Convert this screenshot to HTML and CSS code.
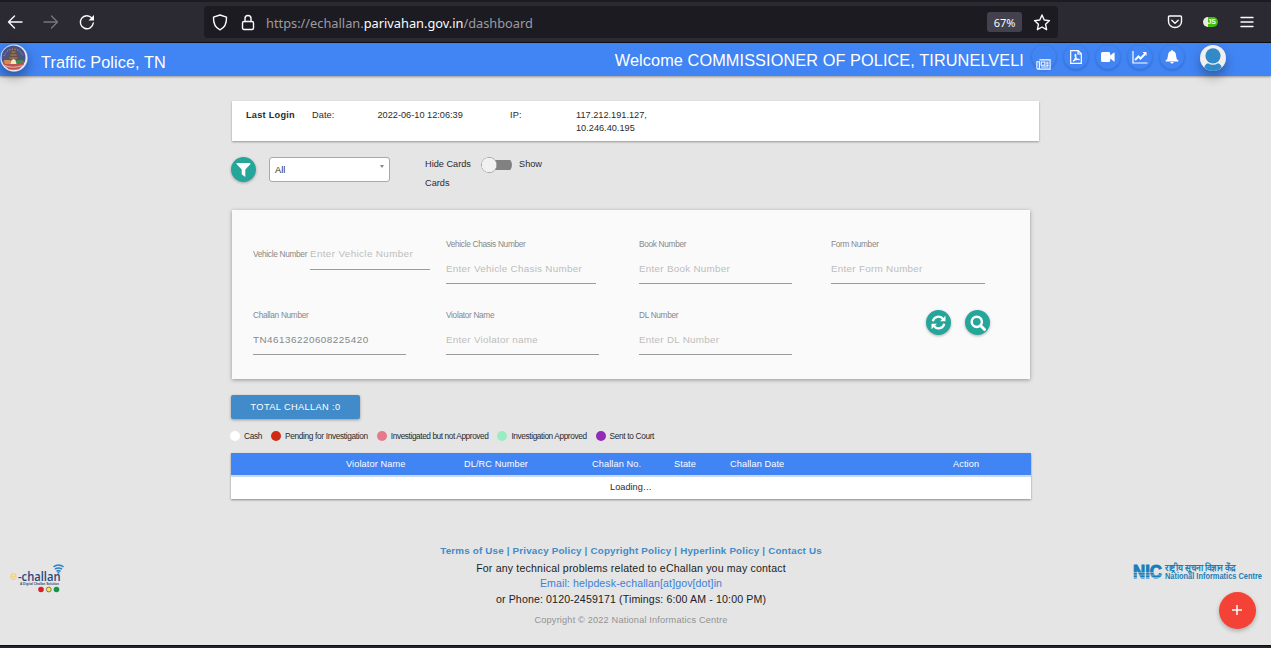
FILE: index.html
```html
<!DOCTYPE html>
<html lang="en">
<head>
<meta charset="utf-8">
<title>eChallan Dashboard</title>
<link rel="stylesheet" href="styles.css">
</head>
<body>
<div class="toolbar">
  <svg class="tool-back" width="16" height="16" viewBox="0 0 16 16"><path d="M15 8H1.500M7.500 2L1.500 8l6 6"/></svg>
  <svg class="tool-forward" width="16" height="16" viewBox="0 0 16 16"><path d="M1 8h13.500M8.500 2l6 6-6 6"/></svg>
  <svg class="tool-reload" width="16" height="16" viewBox="0 0 16 16"><path d="M14.300 9A6.500 6.500 0 1 1 12.800 4L14 5.300"/><path class="solid" d="M15 1v5.500H9.500z"/></svg>
  <div class="urlbar">
    <svg width="16" height="17" viewBox="0 0 16 17"><path d="M8 1L14.500 3.200C14.700 9 13 13.500 8 15.800C3 13.500 1.300 9 1.500 3.200z"/></svg>
    <svg class="lock" width="14" height="17" viewBox="0 0 14 17"><rect x="1.500" y="7.500" width="11" height="8" rx="1.500"/><path d="M4 7.500V4.500a3 3 0 0 1 6 0v3"/></svg>
    <div class="url">https://echallan.<b>parivahan.gov.in</b>/dashboard</div>
    <div class="zoom-level">67%</div>
    <svg width="18" height="17" viewBox="0 0 18 17"><path d="M9 1l2.200 5 5.300.600-3.900 3.700 1 5.400L9 13l-4.600 2.700 1-5.400L1.500 6.600 6.800 6z"/></svg>
  </div>
  <svg class="pocket" width="16" height="14" viewBox="0 0 16 14"><path d="M2.500 1h11a1 1 0 0 1 1 1v4.500a6.500 6 0 0 1-13 0V2a1 1 0 0 1 1-1zM4.800 5.200L8 8.300l3.200-3.100"/></svg>
  <div class="js-toggle"><span>JS</span></div>
  <svg class="menu" width="14" height="12" viewBox="0 0 14 12"><path d="M1 1.500h12M1 6h12M1 10.500h12"/></svg>
</div>

<header class="header">
  <svg class="emblem" width="28" height="28" viewBox="0 0 28 28">
    <circle cx="14" cy="14" r="13.500" fill="#e9e8ee"/>
    <circle cx="13.500" cy="13.500" r="12" fill="#4b5487"/>
    <path d="M2.500 17h22l-1 4-5 4.500H9L4 21z" fill="#bd5450"/>
    <path d="M7 18L11.500 3h4L20 18z" fill="#675046"/>
    <path d="M10.500 11h6M9.500 14h8M11.500 8h4" stroke="#a88b67"/>
    <path d="M4 16h6l3 4H5z" fill="#d88a4b"/><path d="M23 16h-6l-3 4h8z" fill="#3e8a54"/>
    <path d="M10.500 20l1-4 2-1 2 1 1 4z" fill="#f4e8c8"/>
    <path d="M4.500 21.500q9 3.500 18 0" stroke="#e3b9b5" stroke-width="1" fill="none"/>
    <path d="M4 12A10 10 0 0 1 23 12" fill="none" stroke="#b8b5cc" stroke-dasharray="1 1.700" stroke-width="1"/>
  </svg>
  <div class="brand">Traffic Police, TN</div>
  <div class="welcome">Welcome COMMISSIONER OF POLICE, TIRUNELVELI</div>
  <nav class="actions">
    <a class="round news"><svg width="15" height="11" viewBox="0 0 16 12"><path d="M3.500 1h11.700v10H2Q.8 11 .8 9.500V3h2.700v6.500Q3.500 11 2 11"/><path d="M5.500 3.200h4v3.600h-4zM11 3.500h2.500M11 5.200h2.500M11 6.900h2.500M5.500 8.800h8"/></svg></a>
    <a class="round"><svg width="12" height="14" viewBox="0 0 12 14"><path d="M.7.7h7.500l3.100 3.100v9.500H.7zM8 .7V4h3.300"/><path d="M3 11.200c1.800-1 3.400-4.600 2.700-6.500-.4-1-.9.600-.2 2.300.7 1.800 2.200 2.700 3.600 2.600.6-.5-3-.8-6.100 1.600z"/></svg></a>
    <a class="round"><svg width="14" height="10" viewBox="0 0 14 10"><path class="solid" d="M1.500 0h6.500q1.200 0 1.200 1.500V3.500L13 .5q.6 0 .6.500v8q0 .5-.6.500L9.200 6.500v2Q9.200 10 8 10H1.500Q0 10 0 8.500v-7Q0 0 1.500 0z"/></svg></a>
    <a class="round"><svg width="16" height="13" viewBox="0 0 16 13"><path d="M1 0v12h14.500"/><path class="trend" d="M3 9l3.500-3.500 2 2L13 3"/><path class="solid" d="M10.500 1h4v4z"/></svg></a>
    <a class="round"><svg width="14" height="14" viewBox="0 0 14 14"><path class="solid" d="M7 0q.9 0 .9 1 3 .7 3.100 4.500 0 3.500 2.500 5.200V11.500H.5V10.700Q3 9 3 5.500 3.100 1.700 6.100 1 6.100 0 7 0zM5.300 12h3.400Q8.500 13.500 7 13.500T5.300 12z"/></svg></a>
    <svg class="avatar" width="26" height="26" viewBox="0 0 26 26"><circle cx="13" cy="13" r="13" fill="#f1eff0"/><circle cx="13" cy="10.800" r="7.600" fill="#338ac9"/><path d="M4.200 22.500Q5.500 18.500 8 18.200q5 3.300 10 0 2.500.3 3.800 4.300Q18 26 13 26T4.200 22.500z" fill="#338ac9"/></svg>
  </nav>
</header>

<main class="content">
  <section class="login-card">
    <b>Last Login</b><span>Date:</span><span class="tight">2022-06-10 12:06:39</span><span>IP:</span><span class="tight">117.212.191.127,<br>10.246.40.195</span>
  </section>

  <section class="controls">
    <button class="teal"><svg width="15" height="14" viewBox="0 0 15 14"><path class="solid" d="M1 0h13q.9.500.300 1.200L9.300 6.500V14L5.700 11.200V6.500L.7 1.200Q.1.500 1 0z"/></svg></button>
    <div class="select"><span>All</span><i></i></div>
    <div class="switch-row"><span>Hide Cards</span><span class="switch"></span><span>Show</span><span class="second">Cards</span></div>
  </section>

  <section class="filter-card">
    <div class="field inline"><label>Vehicle Number</label><input placeholder="Enter Vehicle Number"></div>
    <div class="field w150"><label>Vehicle Chasis Number</label><input placeholder="Enter Vehicle Chasis Number"></div>
    <div class="field"><label>Book Number</label><input placeholder="Enter Book Number"></div>
    <div class="field w154"><label>Form Number</label><input placeholder="Enter Form Number"></div>
    <div class="field"><label>Challan Number</label><input class="filled" value="TN46136220608225420"></div>
    <div class="field"><label>Violator Name</label><input placeholder="Enter Violator name"></div>
    <div class="field"><label>DL Number</label><input placeholder="Enter DL Number"></div>
    <div class="buttons">
      <button class="teal"><svg width="15" height="15" viewBox="0 0 15 15"><path class="arc" d="M1.800 6.300A5.700 5.700 0 0 1 12 4M13.200 8.700A5.700 5.700 0 0 1 3 11"/><path class="solid" d="M14.500.8v5.400H9.100zM.5 14.200V8.800h5.400z"/></svg></button>
      <button class="teal"><svg width="16" height="16" viewBox="0 0 16 16"><circle class="lens" cx="6.800" cy="6.800" r="5.100"/><path class="handle" d="M10.500 10.500l4 4"/></svg></button>
    </div>
  </section>

  <button class="total">TOTAL CHALLAN :0</button>

  <ul class="legend">
    <li class="cash">Cash</li><li class="pending">Pending for Investigation</li><li class="investigated">Investigated but not Approved</li><li class="approved">Investigation Approved</li><li class="court">Sent to Court</li>
  </ul>

  <section class="table">
    <div class="thead"><span>Violator Name</span><span>DL/RC Number</span><span>Challan No.</span><span>State</span><span>Challan Date</span><span>Action</span></div>
    <div class="row">Loading…</div>
  </section>
</main>

<footer class="footer">
  <svg class="echallan" width="56" height="30" viewBox="0 0 56 30">
    <text x="1" y="16" font-size="13" font-weight="700" fill="#f1d38c">e</text>
    <text x="9" y="17" font-family="Open Sans, sans-serif" font-size="12.500" font-weight="600" textLength="42.500" lengthAdjust="spacingAndGlyphs" fill="#24477f">-challan</text>
    <text x="11" y="21.200" font-size="3.800" font-weight="700" textLength="39" lengthAdjust="spacingAndGlyphs" fill="#35506f">A Digital Challan Solution</text>
    <g fill="none" stroke="#2783c2" stroke-width="1.500"><path d="M44.500 2.800q5-3.600 10 0M46 5.200q3.500-2.600 7 0M47.500 7.300q2-1.500 4 0"/></g><circle cx="49.500" cy="8.700" r="1.100" fill="#2783c2"/>
    <circle cx="32" cy="25.500" r="2.800" fill="#d71f2b"/><circle cx="39.800" cy="25.500" r="2.400" fill="#f5e65c" stroke="#6b6530" stroke-width=".8"/><circle cx="47.500" cy="25.500" r="2.800" fill="#179447"/>
  </svg>
  <div class="footer-text">
    <div class="links"><a>Terms of Use</a> | <a>Privacy Policy</a> | <a>Copyright Policy</a> | <a>Hyperlink Policy</a> | <a>Contact Us</a></div>
    <div class="help">For any technical problems related to eChallan you may contact</div>
    <div class="mail">Email: helpdesk-echallan[at]gov[dot]in</div>
    <div class="phone">or Phone: 0120-2459171 (Timings: 6:00 AM - 10:00 PM)</div>
    <div class="copyright">Copyright © 2022 National Informatics Centre</div>
  </div>
  <svg class="nic" width="132" height="24" viewBox="0 0 132 24">
    <text x="1" y="16.300" font-size="18" font-weight="700" textLength="29" lengthAdjust="spacingAndGlyphs" fill="#1b7db9" stroke="#1b7db9">NIC</text>
    <path d="M0 10.500h31M0 13h31M0 15.500h31" stroke="#e5e5e5" stroke-width=".5"/>
    <text x="33" y="8.500" font-size="9.500" font-weight="700" textLength="71" lengthAdjust="spacingAndGlyphs" fill="#1b7db9">राष्ट्रीय सूचना विज्ञान केंद्र</text>
    <text x="33" y="16.500" font-size="8.300" font-weight="700" textLength="97" lengthAdjust="spacingAndGlyphs" fill="#1b7db9">National Informatics Centre</text>
  </svg>
</footer>
<button class="fab"><svg width="10" height="10" viewBox="0 0 10 10"><path d="M5 0v10M0 5h10"/></svg></button>
<div class="bottom-edge"></div>
</body>
</html>
```

FILE: styles.css
```css
* { box-sizing: border-box; }
body {
  margin: 0;
  height: 648px;
  display: flex;
  flex-direction: column;
  position: relative;
  overflow: hidden;
  background: #e5e5e5;
  color: #2b2b2b;
  font: 9.2px/13px "Liberation Sans", Arial, sans-serif;
}
svg { display: block; flex: none; overflow: visible; }
button { border: 0; padding: 0; font: inherit; display: flex; align-items: center; justify-content: center; }
.solid { fill: #fff !important; stroke: none !important; }

/* Browser toolbar */
.toolbar {
  height: 43px;
  flex: none;
  display: flex;
  align-items: center;
  padding: 0 18px 0 7px;
  background: #2b2a33;
  border-top: 2px solid #1c1b22;
  border-bottom: 1px solid #0c0c13;
}
.toolbar svg { fill: none; stroke: #fbfbfe; stroke-width: 1.4; stroke-linecap: round; stroke-linejoin: round; }
.toolbar .tool-forward { margin-left: 20px; stroke: #77767d; }
.toolbar .tool-reload { margin-left: 20px; }
.urlbar {
  width: 854px;
  height: 32px;
  margin-left: 109px;
  padding: 0 7px 0 8px;
  display: flex;
  align-items: center;
  background: #1c1b22;
  border-radius: 4px;
}
.lock { margin-left: 13px; }
.url { margin-left: 11px; flex: 1; font: 12.8px/18px "Noto Sans", sans-serif; color: #9c9ba1; padding-top: 2px; }
.url b { color: #fbfbfe; font-weight: 400; }
.zoom-level {
  width: 35px;
  height: 20px;
  margin-right: 11px;
  border-radius: 3px;
  background: #42414d;
  color: #fbfbfe;
  font: 11px/21px "Noto Sans", sans-serif;
  text-align: center;
}
.toolbar .pocket { margin-left: 109px; }
.js-toggle {
  width: 15px;
  height: 10px;
  margin-left: 20px;
  border-radius: 5px;
  background: linear-gradient(90deg, #e5e9df 35%, #43bb13 36%);
  color: #fff;
  font: bold 7px/10px "Liberation Sans", sans-serif;
  text-align: right;
  padding-right: 2px;
}
.toolbar .menu { margin-left: auto; margin-right: -1px; }

/* Page header */
.header {
  height: 33px;
  flex: none;
  display: flex;
  align-items: flex-start;
  background: #4184f3;
  color: #fff;
  font-size: 16.3px;
  line-height: 20px;
  box-shadow: 0 1px 2px rgba(0, 0, 0, .35);
}
.emblem { border-radius: 50%; box-shadow: 0 5px 11px rgba(0, 0, 0, .35); margin-top: .5px; }
.brand { margin: 9px 0 0 13px; letter-spacing: .06px; }
.welcome { margin: 7px 0 0 auto; letter-spacing: .09px; }
.actions { display: flex; margin: 2px 45px 0 8px; gap: 8px; }
.round {
  width: 24px;
  height: 24px;
  border-radius: 50%;
  display: flex;
  align-items: center;
  justify-content: center;
  box-shadow: 0 1px 3px rgba(0, 0, 50, .24);
}
.round svg { fill: none; stroke: #fff; stroke-width: 1.2; }
.round .trend { stroke-width: 2; }
.news { padding: 15px 1px 0 0; }
.avatar { margin: 0 0 0 8px; border-radius: 50%; box-shadow: 0 6px 11px rgba(0, 0, 0, .3); }

/* Dashboard */
.content { width: 808px; margin: 25px 0 0 231px; flex: none; }
.login-card {
  margin-left: 1px;
  height: 40px;
  padding: 8px 0 0 14px;
  display: grid;
  grid-template-columns: 66px 65.500px 132.500px 66px 1fr;
  background: #fff;
  box-shadow: 0 1px 2px rgba(0, 0, 0, .35);
  letter-spacing: .1px;
}
.login-card b { letter-spacing: .25px; }
.login-card .tight { letter-spacing: 0; }
.controls { height: 69px; display: flex; padding-top: 16px; }
.teal {
  width: 25px;
  height: 25px;
  border-radius: 50%;
  background: #26a69a;
  box-shadow: 0 1px 3px rgba(0, 0, 0, .3);
}
.teal svg { fill: none; stroke: #fff; }
.arc { stroke-width: 2.2; }
.lens { stroke-width: 2.5; }
.handle { stroke-width: 3; stroke-linecap: round; }
.select {
  width: 121px;
  height: 25px;
  margin-left: 13px;
  padding: 2px 5px 0;
  display: flex;
  align-items: center;
  justify-content: space-between;
  background: #fff;
  border: 1px solid #a8a8a8;
  border-radius: 3px;
}
.select i { border: 2.5px solid transparent; border-top: 3px solid #888; border-bottom: 0; margin-top: -8px; }
.switch-row { display: grid; grid-template-columns: 56px 38px 40px; grid-template-rows: 16px 19px; align-items: center; margin-left: 35px; line-height: 14px; }
.switch-row span:not(.switch, .second) { margin-top: -2px; }
.switch-row .second { line-height: 19px; padding-top: 1px; }
.switch { width: 31px; height: 16px; border-radius: 8px; background: radial-gradient(circle at 8px 8px, #f1f1f1 7px, #a8a8a8 7.500px, transparent 8.500px), linear-gradient(#818181, #818181) 8px 3px / 23px 10px no-repeat; }
.filter-card {
  width: 798px;
  height: 169px;
  margin-left: 1px;
  padding: 29px 0 0 21px;
  display: grid;
  grid-template-columns: 193px 193px 192px 1fr;
  grid-template-rows: 45px 45px;
  row-gap: 26px;
  background: #fafafa;
  box-shadow: 0 1px 4px rgba(0, 0, 0, .35);
}
.field { width: 153px; display: flex; flex-direction: column; gap: 5px; }
.field.w150 { width: 150px; }
.field.w154 { width: 154px; }
.field label { height: 10px; font-size: 8.3px; line-height: 11px; letter-spacing: -.32px; color: #888; white-space: nowrap; }
.field input {
  width: 100%;
  height: 30px;
  padding: 0;
  border: 0;
  border-bottom: 1px solid #9b9b9b;
  background: transparent;
  color: #878787;
  font: 9.9px/13px "Liberation Sans", Arial, sans-serif;
  letter-spacing: .26px;
  border-radius: 0;
}
.field input.filled { letter-spacing: .48px; }
.field input::placeholder { color: #bdbdbd; }
.field.inline { width: 177px; height: 31px; flex-direction: row; align-items: center; gap: 3px; }
.field.inline input { width: 120px; flex: none; height: 31px; padding-bottom: 1px; letter-spacing: .35px; }
.field.inline label { width: 54px; height: 12px; }
.buttons { display: flex; gap: 14px; margin-left: 95px; }
.total {
  width: 129px;
  height: 24px;
  margin-top: 16px;
  background: #428bca;
  color: #fff;
  border-radius: 2px;
  letter-spacing: .4px;
  box-shadow: 0 1px 3px rgba(0, 0, 0, .35);
}
.legend { display: flex; list-style: none; margin: 11px 0 0 -1px; padding: 0; height: 12px; gap: 9px; font-size: 8.3px; line-height: 12px; letter-spacing: -.34px; white-space: nowrap; }
.legend li { display: flex; align-items: center; gap: 4px; }
.legend .investigated { letter-spacing: -.42px; }
.legend .approved { letter-spacing: -.4px; }
.legend li::before { content: ""; width: 10px; height: 10px; border-radius: 50%; background: var(--dot); }
.cash { --dot: #fff; }
.pending { --dot: #cf2a16; }
.investigated { --dot: #e67a8c; }
.approved { --dot: #98edc2; }
.court { --dot: #912bb8; }
.table { width: 800px; margin-top: 11px; background: #fff; box-shadow: 0 1px 2px rgba(0, 0, 0, .4); }
.thead { height: 24px; display: grid; grid-template-columns: 118px 128px 82px 56px 223px 1fr; padding-left: 115px; background: #4184f3; border-bottom: 2px solid #c8daf8; color: #fff; line-height: 22px; letter-spacing: .1px; }
.row { height: 22px; line-height: 21px; text-align: center; }

/* Footer */
.footer { height: 146px; flex: none; display: flex; justify-content: space-between; padding: 45px 7px 0 9px; }
.echallan { margin-top: 20px; }
.nic { margin-top: 18px; }
.footer-text { width: 400px; margin-left: 65px; text-align: center; white-space: nowrap; color: #222; font-size: 10.6px; line-height: 16px; letter-spacing: .17px; }
.links { font-size: 9.8px; line-height: 14px; font-weight: 700; letter-spacing: .19px; color: #428bca; margin-bottom: 2px; }
.mail { color: #3b80da; line-height: 15px; letter-spacing: .1px; }
.phone { letter-spacing: .13px; }
.copyright { font-size: 9.2px; color: #929292; margin-top: 5px; }
.fab { position: absolute; left: 1219px; top: 592px; width: 37px; height: 37px; border-radius: 50%; background: #f44336; box-shadow: 0 2px 4px rgba(0, 0, 0, .25); }
.fab svg { stroke: #fff; stroke-width: 1.5; margin: -1px 1px 0 0; }
.bottom-edge { margin-top: auto; height: 3px; flex: none; background: #24232c; border-top: 1px solid #0d0d12; }
```
